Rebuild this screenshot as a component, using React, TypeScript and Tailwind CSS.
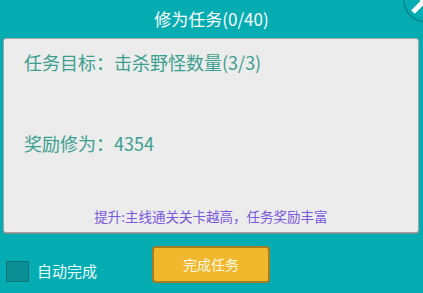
const FONT = { fontFamily: '"Noto Sans CJK SC", "Noto Sans", sans-serif' };

function CloseCorner() {
  // only the lower-left quarter of the round close button is on screen
  return (
    <svg className="absolute left-[398px] top-0" width="25" height="25" viewBox="0 0 25 25">
      <circle cx="28" cy="0" r="22" fill="#05acb2" stroke="#08858b" strokeWidth="1.5" />
      <path d="M15 12 L26 1 M14 -11 L38 13" stroke="#ffffff" strokeWidth="5" strokeLinecap="butt" />
    </svg>
  );
}

export default function App() {
  return (
    <div
      className="relative w-[423px] h-[293px] overflow-hidden bg-[#05adb3]"
      style={FONT}
    >
      <div className="h-[38px] flex items-center justify-center text-[17px] text-white">
        修为任务(0/40)
      </div>
      <CloseCorner />

      <div className="ml-[3px] w-[416px] h-[195px] rounded-[3px] border border-[#a3a3a3] bg-[#ececec] shadow-[0_1px_0_#7d8c8c] flex flex-col">
        <div className="pl-[20px] pt-[9px] text-[18px] leading-[28px] text-[#3a9f8f]">
          任务目标：击杀野怪数量(3/3)
        </div>
        <div className="pl-[20px] mt-[53px] text-[18px] leading-[28px] text-[#3a9f8f]">
          奖励修为：4354
        </div>
        <div className="mt-auto mb-[7px] text-center text-[13.5px] leading-[18px] text-[#7a58dc]">
          提升:主线通关关卡越高，任务奖励丰富
        </div>
      </div>

      <div className="flex items-start">
        <div className="w-[152px] pl-[6px] mt-[27px] flex items-center gap-[8px]">
          <div className="w-[23px] h-[21px] bg-[#0a8f95] border border-[#07767b]" />
          <span className="text-[15px] text-[#eafafa]">自动完成</span>
        </div>
        <button className="mt-[13px] w-[118px] h-[37px] rounded-[4px] border-2 border-[#a87c1e] bg-[#f1b82d] text-[14px] text-[#fff8e6]">
          完成任务
        </button>
      </div>
    </div>
  );
}
